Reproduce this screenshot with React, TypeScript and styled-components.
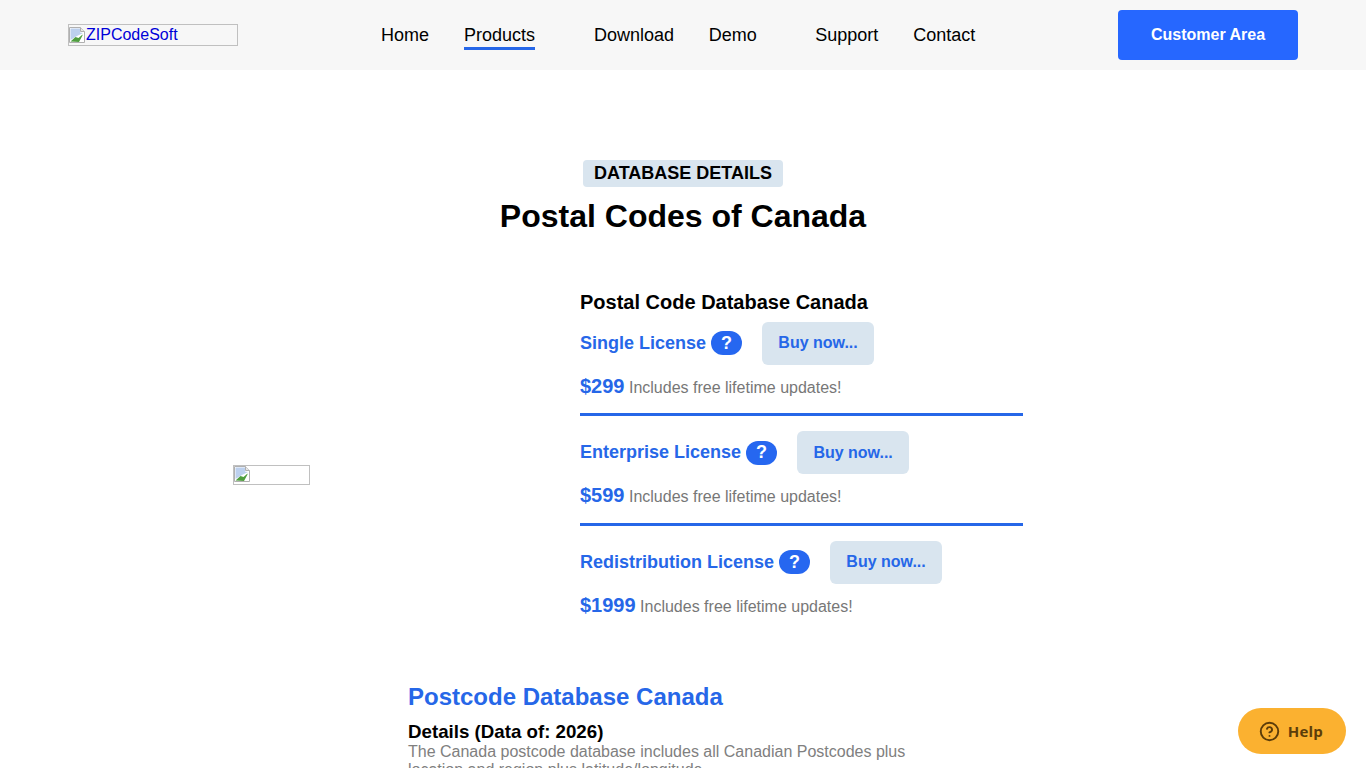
import React from 'react';
import styled, { createGlobalStyle } from 'styled-components';
import { CircleHelp } from 'lucide-react';

const GlobalStyle = createGlobalStyle`
    html, body {
        margin: 0;
        padding: 0;
        overflow: hidden;
        height: 768px;
        background: #fff;
        font-family: "Liberation Sans", Arial, sans-serif;
    }
`;

const Page = styled.div`
    height: 768px;
    overflow: hidden;
`;

const Header = styled.header`
    display: flex;
    align-items: center;
    height: 70px;
    padding: 0 68px;
    background: #f7f7f7;
`;

const Logo = styled.a`
    display: flex;
    align-items: center;
    gap: 1px;
    box-sizing: border-box;
    width: 170px;
    height: 22px;
    border: 1px solid #c0c0c0;
    color: #0000d8;
    font-size: 16px;
`;

const Nav = styled.nav`
    display: flex;
    margin-left: 143px;
`;

const NavItem = styled.a<{ $after: number; $active?: boolean }>`
    margin-right: ${props => props.$after}px;
    padding: 3px 0 1px;
    border-bottom: 3px solid ${props => (props.$active ? '#2667e8' : 'transparent')};
    color: #000;
    font-size: 18px;
    line-height: 22px;
`;

const CustomerButton = styled.a`
    display: flex;
    align-items: center;
    justify-content: center;
    width: 180px;
    height: 50px;
    margin-left: auto;
    border-radius: 4px;
    background: #2667ff;
    color: #fff;
    font-size: 16px;
    font-weight: 700;
`;

const Intro = styled.section`
    display: flex;
    flex-direction: column;
    align-items: center;
    padding-top: 90px;
`;

const Tag = styled.div`
    padding: 2px 11px;
    border-radius: 4px;
    background: #d9e5ef;
    color: #000;
    font-size: 18px;
    font-weight: 700;
    line-height: 23px;
`;

const Title = styled.h1`
    margin: 10px 0 0;
    color: #000;
    font-size: 32px;
    font-weight: 700;
    line-height: 38px;
`;

const Product = styled.section`
    display: flex;
    width: 790px;
    margin: 55px auto 0 233px;
`;

const ImageColumn = styled.div`
    display: flex;
    align-items: center;
    width: 347px;
    padding-top: 41px;
`;

const BrokenFrame = styled.div`
    box-sizing: border-box;
    width: 77px;
    height: 20px;
    border: 1px solid #c0c0c0;
`;

const Licenses = styled.div`
    flex: 1;
`;

const ProductName = styled.h3`
    margin: 0 0 7.6px;
    color: #000;
    font-size: 20px;
    font-weight: 700;
    line-height: 24px;
`;

const License = styled.div<{ $last?: boolean }>`
    padding-bottom: ${props => (props.$last ? 0 : '13.6px')};
    margin-bottom: ${props => (props.$last ? 0 : '15px')};
    border-bottom: ${props => (props.$last ? 'none' : '3px solid #2667e8')};
`;

const LicenseHead = styled.div`
    display: flex;
    align-items: center;
`;

const LicenseName = styled.span`
    color: #2667e8;
    font-size: 18px;
    font-weight: 700;
`;

const HelpBadge = styled.span`
    display: flex;
    align-items: center;
    justify-content: center;
    width: 31px;
    height: 24px;
    margin-left: 5px;
    border-radius: 12px;
    background: #2667f0;
    color: #fff;
    font-size: 18px;
    font-weight: 700;
`;

const BuyButton = styled.a`
    display: flex;
    align-items: center;
    justify-content: center;
    width: 112px;
    height: 43px;
    margin-left: 20px;
    border-radius: 6px;
    background: #d9e5ef;
    color: #2667e8;
    font-size: 16px;
    font-weight: 700;
`;

const PriceLine = styled.div`
    margin-top: 9px;
    color: #777;
    font-size: 16px;
    line-height: 24px;
`;

const Price = styled.span`
    color: #2667e8;
    font-size: 20px;
    font-weight: 700;
`;

const Details = styled.section`
    width: 510px;
    margin: 63px 0 0 408px;
`;

const DetailsTitle = styled.h2`
    margin: 0;
    color: #2667e8;
    font-size: 24px;
    font-weight: 700;
    line-height: 30px;
`;

const DetailsSub = styled.h3`
    margin: 8px 0 0;
    color: #000;
    font-size: 18.72px;
    font-weight: 700;
    line-height: 23px;
`;

const DetailsText = styled.p`
    margin: 0;
    color: #808080;
    font-size: 16px;
    line-height: 18px;
`;

const HelpButton = styled.button`
    position: fixed;
    right: 20px;
    bottom: 14px;
    display: flex;
    align-items: center;
    gap: 8px;
    height: 46px;
    padding: 0 23px 0 21px;
    border: none;
    border-radius: 23px;
    background: #fbb130;
    color: #5c3d0a;
    font-family: "Open Sans", sans-serif;
    font-size: 15px;
    font-weight: 700;
    letter-spacing: 0.2px;
`;

const BrokenImageIcon: React.FunctionComponent = () => (
    <svg width="16" height="16" viewBox="0 0 16 16" style={{ flex: 'none', display: 'block' }}>
        <path d="M.5.5h11l4 4v11H.5z" fill="#fff" stroke="#b0b0b0" />
        <path d="M11.500.5v4h4" fill="#e6e6e6" stroke="#b0b0b0" />
        <path d="M1.500 1.500h9.500v4l3 .5-6 3-6.500 4z" fill="#bcd0ee" />
        <path d="M1.500 14.500l5-4.500 3 1 4-3.500v1l-3.500 6.500z" fill="#4f9e3f" />
    </svg>
);

interface LicenseBlockProps {
    name: string;
    price: string;
    last?: boolean;
}

const LicenseBlock: React.FunctionComponent<LicenseBlockProps> = ({ name, price, last }) => (
    <License $last={last}>
        <LicenseHead>
            <LicenseName>{name}</LicenseName>
            <HelpBadge>?</HelpBadge>
            <BuyButton>Buy now...</BuyButton>
        </LicenseHead>
        <PriceLine>
            <Price>{price}</Price> Includes free lifetime updates!
        </PriceLine>
    </License>
);

const App: React.FunctionComponent = () => (
    <Page>
        <GlobalStyle />
        <Header>
            <Logo>
                <BrokenImageIcon />
                ZIPCodeSoft
            </Logo>
            <Nav>
                <NavItem $after={35}>Home</NavItem>
                <NavItem $after={59} $active>Products</NavItem>
                <NavItem $after={34.6}>Download</NavItem>
                <NavItem $after={58.4}>Demo</NavItem>
                <NavItem $after={35}>Support</NavItem>
                <NavItem $after={0}>Contact</NavItem>
            </Nav>
            <CustomerButton>Customer Area</CustomerButton>
        </Header>
        <Intro>
            <Tag>DATABASE DETAILS</Tag>
            <Title>Postal Codes of Canada</Title>
        </Intro>
        <Product>
            <ImageColumn>
                <BrokenFrame>
                    <BrokenImageIcon />
                </BrokenFrame>
            </ImageColumn>
            <Licenses>
                <ProductName>Postal Code Database Canada</ProductName>
                <LicenseBlock name="Single License" price="$299" />
                <LicenseBlock name="Enterprise License" price="$599" />
                <LicenseBlock name="Redistribution License" price="$1999" last />
            </Licenses>
        </Product>
        <Details>
            <DetailsTitle>Postcode Database Canada</DetailsTitle>
            <DetailsSub>Details (Data of: 2026)</DetailsSub>
            <DetailsText>
                The Canada postcode database includes all Canadian Postcodes plus location and region plus
                latitude/longitude.
            </DetailsText>
        </Details>
        <HelpButton>
            <CircleHelp size={21} strokeWidth={2.2} />
            Help
        </HelpButton>
    </Page>
);

export default App;
